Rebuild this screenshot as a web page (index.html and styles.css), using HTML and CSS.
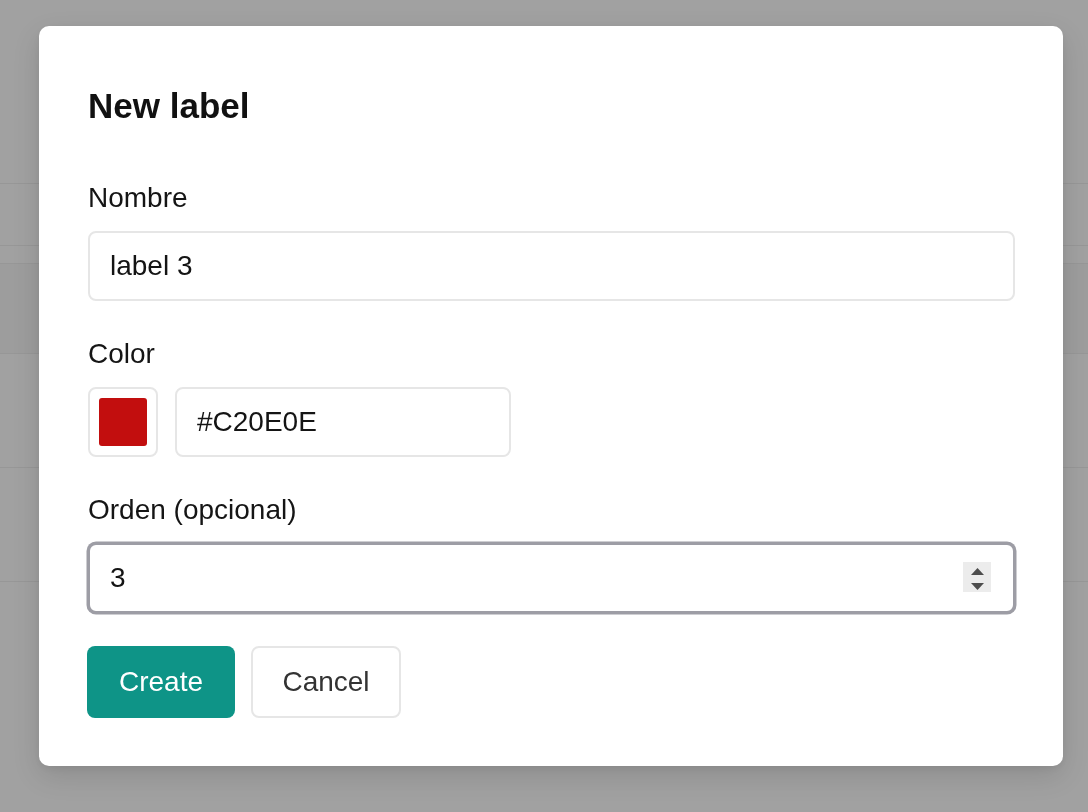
FILE: index.html
```html
<!DOCTYPE html>
<html lang="es">
<head>
<meta charset="utf-8">
<title>New label</title>
<link rel="stylesheet" href="styles.css">
</head>
<body>
<div class="page">
  <div class="page-head"></div>
  <div class="row r1"></div>
  <div class="row r2"></div>
  <div class="row r3"></div>
  <div class="row r4"></div>
  <div class="row r5"></div>
</div>

<div class="overlay">
  <div class="modal">
    <h2 class="title">New label</h2>

    <div class="field">
      <label class="label">Nombre</label>
      <input class="input" type="text" value="label 3">
    </div>

    <div class="field">
      <label class="label">Color</label>
      <div class="color-row">
        <div class="swatch-box"><div class="swatch"></div></div>
        <input class="input hex" type="text" value="#C20E0E">
      </div>
    </div>

    <div class="field">
      <label class="label">Orden (opcional)</label>
      <div class="num-wrap">
        <input class="input focused" type="text" value="3">
        <span class="spinner">
          <svg width="28" height="30" viewBox="0 0 28 30">
            <polygon points="8,13 21,13 14.5,6" fill="#4d4d4d"/>
            <polygon points="8,21 21,21 14.5,28" fill="#4d4d4d"/>
          </svg>
        </span>
      </div>
    </div>

    <div class="actions">
      <button class="btn primary" type="button">Create</button>
      <button class="btn secondary" type="button">Cancel</button>
    </div>
  </div>
</div>
</body>
</html>
```

FILE: styles.css
```css
html, body {
  margin: 0;
  padding: 0;
}
body {
  width: 1088px;
  height: 812px;
  overflow: hidden;
  background: #a1a1a1;
  font-family: "Liberation Sans", Arial, sans-serif;
}

.page {
  display: flex;
  flex-direction: column;
}
.page-head {
  height: 183px;
  border-bottom: 1px solid #979797;
}
.row {
  border-bottom: 1px solid #979797;
}
.r1 { height: 61px; }
.r2 { height: 17px; }
.r3 { height: 89px; background: #9d9d9d; }
.r4 { height: 113px; }
.r5 { height: 113px; }

.overlay {
  position: fixed;
  inset: 0;
  display: flex;
  justify-content: flex-start;
  align-items: flex-start;
  padding: 26px 0 0 39px;
}

.modal {
  box-sizing: border-box;
  width: 1024px;
  height: 740px;
  background: #ffffff;
  border-radius: 10px;
  padding: 60px 48px 48px 49px;
  box-shadow: 0 10px 28px rgba(0, 0, 0, 0.12), 0 3px 8px rgba(0, 0, 0, 0.06);
  display: flex;
  flex-direction: column;
}

.title {
  margin: 0 0 56px 0;
  font-size: 35px;
  line-height: 40px;
  font-weight: 700;
  color: #111111;
}

.field {
  display: flex;
  flex-direction: column;
  margin-bottom: 37px;
}
.field:nth-of-type(3) {
  margin-bottom: 33px;
}

.label {
  font-size: 28px;
  line-height: 32px;
  color: #151515;
  margin-bottom: 17px;
}

.input {
  box-sizing: border-box;
  height: 70px;
  width: 100%;
  margin: 0;
  border: 2px solid #e6e6e6;
  border-radius: 8px;
  padding: 0 20px;
  font-family: "Liberation Sans", Arial, sans-serif;
  font-size: 28px;
  color: #141414;
  background: #ffffff;
  outline: none;
}

.color-row {
  display: flex;
  gap: 17px;
}
.swatch-box {
  box-sizing: border-box;
  width: 70px;
  height: 70px;
  border: 2px solid #e6e6e6;
  border-radius: 8px;
  padding: 9px;
}
.swatch {
  width: 48px;
  height: 48px;
  border-radius: 3px;
  background: #c20e0e;
}
.hex {
  width: 336px;
}

.num-wrap {
  position: relative;
}
.focused {
  border-color: #9d9da5;
  box-shadow: 0 0 0 1.5px #9d9da5;
}
.spinner {
  position: absolute;
  right: 24px;
  top: 19px;
  width: 28px;
  height: 30px;
  background: #ececec;
  display: block;
}
.spinner svg {
  display: block;
}

.actions {
  display: flex;
  gap: 16px;
}
.btn {
  box-sizing: border-box;
  height: 72px;
  border-radius: 8px;
  font-family: "Liberation Sans", Arial, sans-serif;
  font-size: 28px;
  padding: 0;
  cursor: pointer;
}
.primary {
  width: 148px;
  margin-left: -1px;
  background: #0e9487;
  border: none;
  color: #ffffff;
}
.secondary {
  width: 150px;
  background: #ffffff;
  border: 2px solid #e6e6e6;
  color: #333333;
}
```
